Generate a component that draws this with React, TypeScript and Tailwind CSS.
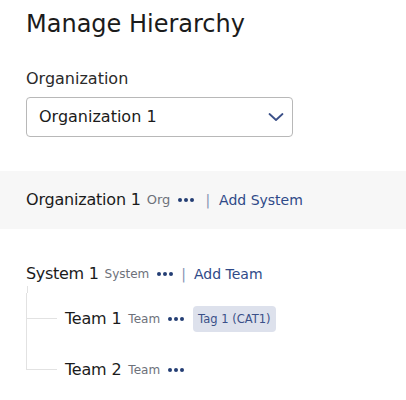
const font = { fontFamily: '"DejaVu Sans", "Liberation Sans", sans-serif' };

function Dots() {
  return (
    <span className="flex items-center gap-[2px]">
      <span className="h-1 w-1 rounded-full bg-[#243e74]" />
      <span className="h-1 w-1 rounded-full bg-[#243e74]" />
      <span className="h-1 w-1 rounded-full bg-[#243e74]" />
    </span>
  );
}

function TreeChild({ name, last, tag }: { name: string; last?: boolean; tag?: string }) {
  return (
    <div className="relative flex h-[51px] items-center pl-[38px]">
      {/* connector: vertical half + horizontal */}
      <span className="absolute left-[-1px] top-0 h-1/2 w-[31px] border-b border-l border-[#e2e2e2]" />
      {!last && <span className="absolute left-[-1px] top-1/2 bottom-0 border-l border-[#e2e2e2]" />}
      <span className="text-[16px] tracking-[-0.2px] text-[#1b1b1b]">{name}</span>
      <span className="ml-[7px] text-[12px] text-[#6d717a]">Team</span>
      <span className="ml-[8px]">
        <Dots />
      </span>
      {tag && (
        <span className="ml-[9px] rounded-[4px] bg-[#dde1ec] px-[5px] py-[5px] text-[11.5px] leading-4 text-[#3a5088]">
          {tag}
        </span>
      )}
    </div>
  );
}

export default function App() {
  return (
    <div className="min-h-[400px] bg-white pt-2" style={font}>
      <div className="px-[26px]">
        <h1 className="text-[24px] leading-8 text-[#1b1b1b]">Manage Hierarchy</h1>
        <label className="mt-[27px] block text-[16px] leading-6 text-[#2a2a2a]">Organization</label>
        <div className="mt-[6px] flex h-10 w-[267px] items-center justify-between rounded-[4px] border border-[#b8b8b8] pl-3 pr-[8px]">
          <span className="text-[16px] text-[#1b1b1b]">Organization 1</span>
          <svg width="16" height="10" viewBox="0 0 16 10" fill="none">
            <path d="M1.5 2 L8 8 L14.5 2" stroke="#3b5088" strokeWidth="1.8" strokeLinecap="round" strokeLinejoin="round" />
          </svg>
        </div>
      </div>

      {/* organization band */}
      <div className="mt-[34px] flex h-[58px] items-center bg-[#f7f7f7] px-[26px]">
        <span className="text-[16px] tracking-[-0.2px] text-[#1b1b1b]">Organization 1</span>
        <span className="ml-[6px] text-[13px] text-[#6d717a]">Org</span>
        <span className="ml-[8px]">
          <Dots />
        </span>
        <span className="ml-[11px] text-[14px] text-[#8592b2]">|</span>
        <span className="ml-[9px] text-[14px] text-[#2f4a88]">Add System</span>
      </div>

      {/* system */}
      <div className="mt-[33px] px-[26px]">
        <div className="flex h-6 items-center">
          <span className="text-[16px] tracking-[-0.3px] text-[#1b1b1b]">System 1</span>
          <span className="ml-[6px] text-[12px] text-[#6d717a]">System</span>
          <span className="ml-[8px]">
            <Dots />
          </span>
          <span className="ml-[8px] text-[14px] text-[#8592b2]">|</span>
          <span className="ml-[8px] text-[14px] text-[#2f4a88]">Add Team</span>
        </div>
        <div className="ml-[1px]">
          <div className="h-[7px] border-l border-[#e2e2e2]" />
          <TreeChild name="Team 1" tag="Tag 1 (CAT1)" />
          <TreeChild name="Team 2" last />
        </div>
      </div>
    </div>
  );
}
